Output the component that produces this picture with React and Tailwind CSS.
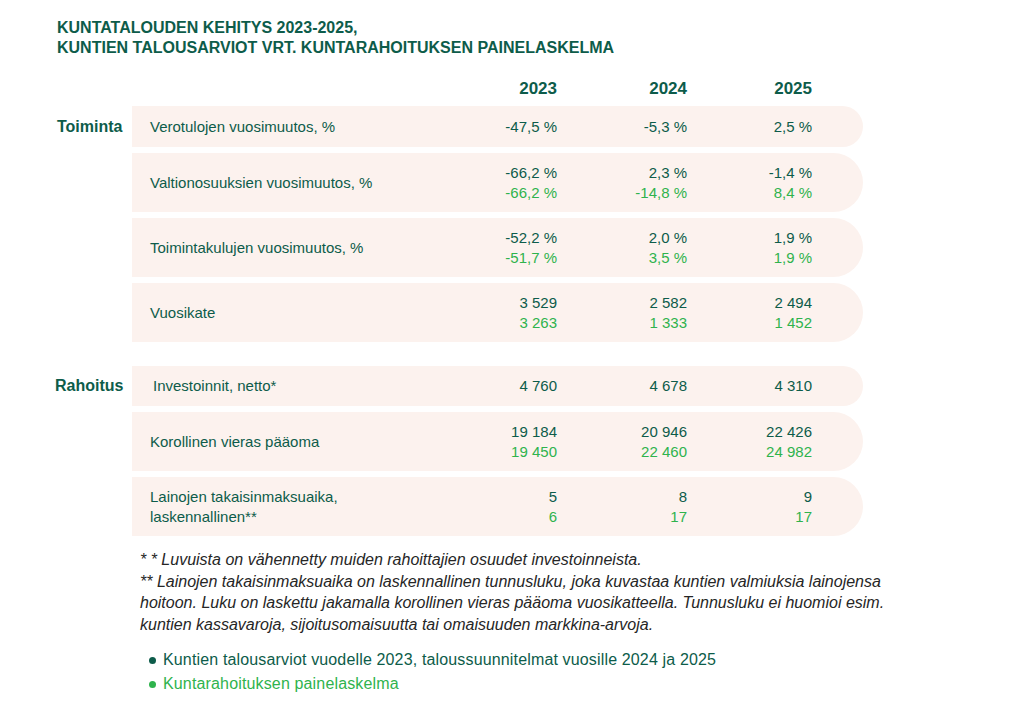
const dark = "text-[#0d5c4a]";
const light = "text-[#2fb34d]";

const toiminta = [
  { label: "Verotulojen vuosimuutos, %", h: "h-[41px]", a: ["-47,5 %", "-5,3 %", "2,5 %"] },
  {
    label: "Valtionosuuksien vuosimuutos, %",
    h: "h-[59px]",
    a: ["-66,2 %", "2,3 %", "-1,4 %"],
    b: ["-66,2 %", "-14,8 %", "8,4 %"],
  },
  {
    label: "Toimintakulujen vuosimuutos, %",
    h: "h-[59px]",
    a: ["-52,2 %", "2,0 %", "1,9 %"],
    b: ["-51,7 %", "3,5 %", "1,9 %"],
  },
  { label: "Vuosikate", h: "h-[59px]", a: ["3 529", "2 582", "2 494"], b: ["3 263", "1 333", "1 452"] },
];

const rahoitus = [
  { label: "Investoinnit, netto*", indent: true, h: "h-[40px]", a: ["4 760", "4 678", "4 310"] },
  {
    label: "Korollinen vieras pääoma",
    h: "h-[59px]",
    a: ["19 184", "20 946", "22 426"],
    b: ["19 450", "22 460", "24 982"],
  },
  {
    label: ["Lainojen takaisinmaksuaika,", "laskennallinen**"],
    h: "h-[59px]",
    a: ["5", "8", "9"],
    b: ["6", "17", "17"],
  },
];

const cols = "grid grid-cols-[1fr_130px_130px_125px] pl-[18px] pr-[51px]";

function Row({ row }) {
  return (
    <div className={`${cols} ${row.h} items-center bg-[#fcf2ee] rounded-r-full text-[15px] leading-[20px]`}>
      <div className={`${dark} ${row.indent ? "pl-[3px]" : ""}`}>
        {Array.isArray(row.label) ? (
          <>
            {row.label[0]}
            <br />
            {row.label[1]}
          </>
        ) : (
          row.label
        )}
      </div>
      {row.a.map((v, i) => (
        <div key={i} className="text-right">
          <div className={dark}>{v}</div>
          {row.b && <div className={light}>{row.b[i]}</div>}
        </div>
      ))}
    </div>
  );
}

function Section({ title, rows, first }) {
  return (
    <div className="flex">
      <div className={`w-[75px] shrink-0 ${first} flex items-center`}>
        <span className={`text-[16px] font-bold ${dark} ${title === "Rahoitus" ? "-ml-[2px]" : ""}`}>{title}</span>
      </div>
      <div className="w-[731px] flex flex-col gap-[6px]">
        {rows.map((r, i) => (
          <Row key={i} row={r} />
        ))}
      </div>
    </div>
  );
}

export default function App() {
  return (
    <div className="w-[1024px] h-[716px] bg-white pt-[18px] pl-[57px] font-['Liberation_Sans',Arial,sans-serif]">
      <h1 className={`text-[16px] leading-[20px] font-bold ${dark}`}>
        KUNTATALOUDEN KEHITYS 2023-2025,
        <br />
        KUNTIEN TALOUSARVIOT VRT. KUNTARAHOITUKSEN PAINELASKELMA
      </h1>

      <div className={`ml-[75px] w-[731px] mt-[21px] ${cols} text-[17px] leading-[20px] font-bold ${dark}`}>
        <div />
        <div className="text-right">2023</div>
        <div className="text-right">2024</div>
        <div className="text-right">2025</div>
      </div>

      <div className="mt-[7px]">
        <Section title="Toiminta" rows={toiminta} first="h-[41px]" />
      </div>
      <div className="mt-[24px]">
        <Section title="Rahoitus" rows={rahoitus} first="h-[40px]" />
      </div>

      <div className="ml-[83px] mt-[13px] text-[16px] leading-[21.5px] italic text-[#262626] whitespace-nowrap">
        <p>* * Luvuista on vähennetty muiden rahoittajien osuudet investoinneista.</p>
        <p>
          ** Lainojen takaisinmaksuaika on laskennallinen tunnusluku, joka kuvastaa kuntien valmiuksia lainojensa
          <br />
          hoitoon. Luku on laskettu jakamalla korollinen vieras pääoma vuosikatteella. Tunnusluku ei huomioi esim.
          <br />
          kuntien kassavaroja, sijoitusomaisuutta tai omaisuuden markkina-arvoja.
        </p>
      </div>

      <ul className="ml-[92px] mt-[13px] text-[16px] leading-[24px] tracking-[0.15px]">
        <li className={`flex items-center ${dark}`}>
          <span className="w-[7px] h-[7px] rounded-full bg-[#0d5c4a] mr-[7px]" />
          Kuntien talousarviot vuodelle 2023, taloussuunnitelmat vuosille 2024 ja 2025
        </li>
        <li className={`flex items-center ${light}`}>
          <span className="w-[7px] h-[7px] rounded-full bg-[#2fb34d] mr-[7px]" />
          Kuntarahoituksen painelaskelma
        </li>
      </ul>
    </div>
  );
}
